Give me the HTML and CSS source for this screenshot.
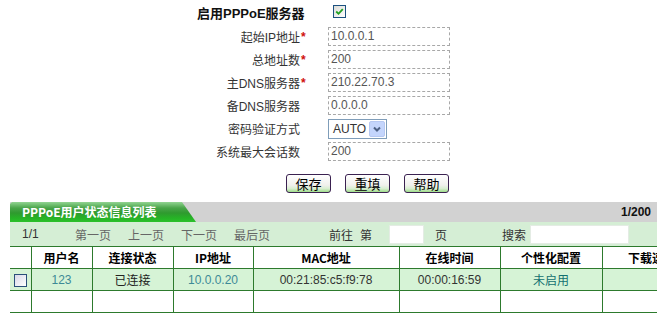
FILE: index.html
```html
<!DOCTYPE html>
<html lang="zh-CN">
<head>
  <meta charset="UTF-8" />
  <title>PPPoE服务器</title>
  <link rel="stylesheet" href="styles.css">
</head>
<body>
  <div class="form">
    <div class="title">启用PPPoE服务器</div>
    <div></div>
    <div><span class="check checked"><svg viewBox="0 0 11 11" width="9" height="9"><path d="M1.5 5.5 L4.3 8.3 L9.5 2.5" fill="none" stroke="#21a121" stroke-width="2.2"/></svg></span></div>

    <div class="label">起始IP地址</div><div class="star">*</div>
    <div class="input">10.0.0.1</div>

    <div class="label">总地址数</div><div class="star">*</div>
    <div class="input">200</div>

    <div class="label">主DNS服务器</div><div class="star">*</div>
    <div class="input">210.22.70.3</div>

    <div class="label">备DNS服务器</div><div></div>
    <div class="input">0.0.0.0</div>

    <div class="label">密码验证方式</div><div></div>
    <div><span class="select">AUTO<span class="arrow"><svg viewBox="0 0 10 10" width="10" height="10"><path d="M2 3.5 L5 6.5 L8 3.5" fill="none" stroke="#4d6185" stroke-width="2"/></svg></span></span></div>

    <div class="label">系统最大会话数</div><div></div>
    <div class="input">200</div>
  </div>

  <div class="buttons">
    <button>保存</button>
    <button>重填</button>
    <button>帮助</button>
  </div>

  <div class="panel">
    <div class="tabbar">
      <div class="tab">PPPoE用户状态信息列表</div>
      <div class="count">1/200</div>
    </div>

    <div class="pager">
      <span class="pages">1/1</span>
      <span class="link first">第一页</span>
      <span class="link">上一页</span>
      <span class="link">下一页</span>
      <span class="link">最后页</span>
      <span class="goto">前往</span>
      <span class="di">第</span>
      <span class="box page-box"></span>
      <span class="ye">页</span>
      <span class="search">搜索</span>
      <span class="box search-box"></span>
    </div>

    <table class="users">
      <colgroup>
        <col style="width:21px"><col style="width:61px"><col style="width:81px"><col style="width:80px">
        <col style="width:146px"><col style="width:101px"><col style="width:102px"><col style="width:100px">
      </colgroup>
      <thead>
        <tr>
          <th></th><th>用户名</th><th>连接状态</th><th>IP地址</th><th>MAC地址</th><th>在线时间</th><th>个性化配置</th><th>下载速率</th>
        </tr>
      </thead>
      <tbody>
        <tr class="on">
          <td><span class="check small"></span></td>
          <td class="teal">123</td>
          <td>已连接</td>
          <td class="teal">10.0.0.20</td>
          <td class="dark">00:21:85:c5:f9:78</td>
          <td class="dark">00:00:16:59</td>
          <td class="cfg">未启用</td>
          <td></td>
        </tr>
        <tr>
          <td></td><td></td><td></td><td></td><td></td><td></td><td></td><td></td>
        </tr>
      </tbody>
    </table>
  </div>
</body>
</html>
```

FILE: styles.css
```css
* { box-sizing: border-box; margin: 0; padding: 0; }
body {
  font-family: "Liberation Sans", "Noto Sans CJK SC", sans-serif;
  font-size: 12px;
  color: #222;
  background: #fff;
  width: 668px;
  overflow: hidden;
}

.form {
  display: grid;
  grid-template-columns: 103px 28px 122px;
  grid-auto-rows: 19px;
  row-gap: 4px;
  margin-left: 197px;
  padding-top: 4px;
  align-items: center;
}

.title {
  font-size: 13px;
  font-weight: bold;
  color: #111;
  white-space: nowrap;
  margin-top: -3px;
}

.label {
  text-align: right;
  color: #333;
  white-space: nowrap;
}

.star {
  color: #d01010;
  font-weight: bold;
  padding-left: 1px;
}

.input {
  height: 19px;
  border: 1px dashed #a8a8a8;
  color: #555;
  line-height: 17px;
  padding-left: 2px;
  font-size: 12px;
}

.check {
  display: inline-block;
  width: 13px;
  height: 13px;
  border: 1px solid #1c5180;
  background: linear-gradient(135deg, #dcdcd7, #fff);
  vertical-align: top;
}
.check.checked {
  margin-top: -2px;
  margin-left: 5px;
  padding: 1px;
}
.check svg { display: block; }

.select {
  display: inline-flex;
  align-items: center;
  width: 59px;
  height: 20px;
  border: 1px solid #7f9db9;
  background: #fff;
  color: #333;
  padding-left: 4px;
  font-size: 12px;
  justify-content: space-between;
}
.select .arrow {
  display: flex;
  align-items: center;
  justify-content: center;
  width: 16px;
  height: 16px;
  margin-right: 1px;
  background: #c4d5fc;
  border: 1px solid #b6c8f2;
  border-radius: 2px;
}

.buttons {
  display: flex;
  gap: 14px;
  margin: 13px 0 0 286px;
}
.buttons button {
  width: 45px;
  height: 19px;
  font-family: "Noto Sans CJK SC", sans-serif;
  font-size: 13px;
  line-height: 15px;
  color: #000;
  border: 1px solid #3a2150;
  border-radius: 3px;
  background: linear-gradient(#ffffff, #f0f0ec 60%, #d8eed0 80%, #9edc8a);
}

.panel {
  margin: 9px 0 0 10px;
  width: 647px;
  overflow: hidden;
}

.tabbar {
  display: flex;
  justify-content: space-between;
  align-items: center;
  height: 20px;
  background: #d2d2d2;
}
.tab {
  width: 186px;
  height: 20px;
  padding-left: 12px;
  line-height: 20px;
  font-family: "Noto Sans CJK SC", sans-serif;
  font-weight: bold;
  font-size: 12px;
  color: #fff;
  background: linear-gradient(#92d492, #4aa54a 30%, #2f9a2f 55%, #26b326 80%, #2cc12c);
  clip-path: polygon(0 2px, 2px 0, 172px 0, 186px 100%, 0 100%);
}
.count {
  font-weight: bold;
  color: #111;
  padding-right: 6px;
}

.pager {
  display: flex;
  align-items: center;
  height: 24px;
  background: #d5eed5;
  color: #333;
  white-space: nowrap;
}
.pages { margin-left: 12px; width: 53px; }
.link { color: #666; margin-right: 17px; }
.goto { margin-left: 42px; }
.di { margin-left: 7px; }
.box {
  display: inline-block;
  height: 19px;
  background: #fff;
  border: 1px solid #e4ece4;
}
.page-box { width: 35px; margin-left: 17px; }
.ye { margin-left: 11px; }
.search { margin-left: 55px; }
.search-box { width: 99px; margin-left: 4px; }

.users {
  table-layout: fixed;
  width: 692px;
  border-collapse: collapse;
  border-top: 1px solid #2d7a2d;
}
.users th, .users td {
  height: 22px;
  border-bottom: 1px solid #2d7a2d;
  border-right: 1px solid #2d7a2d;
  text-align: center;
  white-space: nowrap;
  overflow: hidden;
}
.users th {
  background: #fff;
  font-family: "Noto Sans CJK SC", sans-serif;
  font-weight: bold;
  color: #000;
}
.users tr.on td { background: #d6f3d6; }
.users td.teal { color: #3d8a96; }
.users td.dark { color: #333; }
.users td.cfg { color: #137070; }
.check.small {
  width: 13px;
  height: 13px;
  vertical-align: middle;
  border-color: #2a4f7a;
  background: linear-gradient(135deg, #d8d8e8, #fff);
}
```
